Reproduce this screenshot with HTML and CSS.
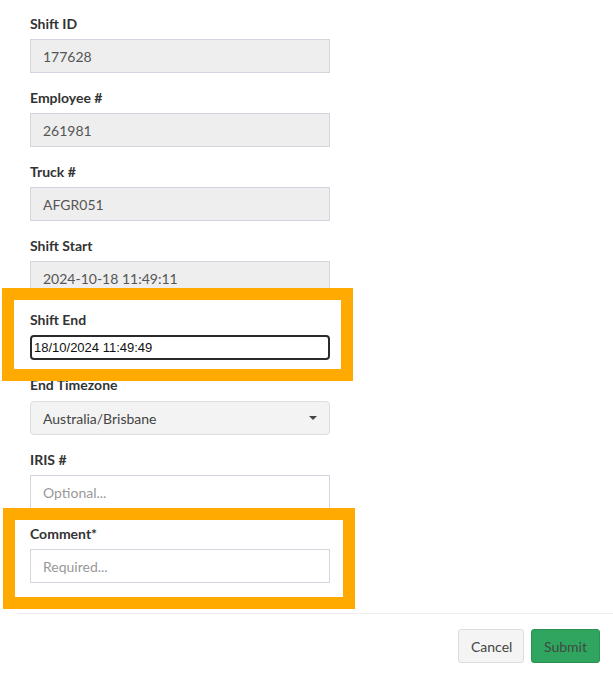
FILE: index.html
```html
<!DOCTYPE html>
<html>
<head>
<meta charset="utf-8">
<link rel="stylesheet" href="styles.css">
</head>
<body>
<div class="modal">
  <div class="modal-body">
    <div class="group">
      <label class="lbl">Shift ID</label>
      <div class="field disabled">177628</div>
    </div>
    <div class="group">
      <label class="lbl">Employee #</label>
      <div class="field disabled">261981</div>
    </div>
    <div class="group">
      <label class="lbl">Truck #</label>
      <div class="field disabled">AFGR051</div>
    </div>
    <div class="group">
      <label class="lbl">Shift Start</label>
      <div class="field disabled">2024-10-18 11:49:11</div>
    </div>
    <div class="group hl-wrap">
      <div class="highlight hl-one"></div>
      <label class="lbl">Shift End</label>
      <div class="field datetime">18/10/2024 11:49:49</div>
    </div>
    <div class="group">
      <label class="lbl">End Timezone</label>
      <div class="field select"><span>Australia/Brisbane</span><span class="caret"></span></div>
    </div>
    <div class="group">
      <label class="lbl">IRIS #</label>
      <div class="field placeholder">Optional...</div>
    </div>
    <div class="group hl-wrap">
      <div class="highlight hl-two"></div>
      <label class="lbl">Comment*</label>
      <div class="field placeholder">Required...</div>
    </div>
  </div>
  <div class="modal-footer">
    <button class="btn btn-default">Cancel</button>
    <button class="btn btn-success">Submit</button>
  </div>
</div>
</body>
</html>
```
FILE: styles.css
```css
html, body {
  margin: 0;
  padding: 0;
  background: #fff;
}
body {
  font-family: Lato, "Open Sans", sans-serif;
  font-size: 14px;
  color: #333;
}
.modal {
  margin-left: 17px;
}
.modal-body {
  padding: 14px 13px 15px 13px;
}
.group {
  width: 300px;
  margin-bottom: 15px;
  display: flex;
  flex-direction: column;
}
.hl-wrap {
  position: relative;
}
.lbl {
  font-weight: 700;
  font-size: 14px;
  line-height: 20px;
  height: 20px;
  margin-bottom: 5px;
  color: #333;
}
.field {
  box-sizing: border-box;
  height: 34px;
  padding: 0 12px;
  border: 1px solid #d2d6de;
  background: #fff;
  color: #555;
  font-size: 14px;
  display: flex;
  align-items: center;
}
.disabled {
  background: #eee;
}
.datetime {
  height: 25px;
  border: 2px solid #2b2b2b;
  border-radius: 4px;
  padding: 0 2px;
  font-family: "Liberation Sans", Arial, sans-serif;
  font-size: 13px;
  color: #111;
}
.select {
  margin-top: 1px;
  background: #f3f3f3;
  border-color: #ddd;
  border-radius: 4px;
  color: #444;
  justify-content: space-between;
}
.caret {
  width: 0;
  height: 0;
  border-left: 4px solid transparent;
  border-right: 4px solid transparent;
  border-top: 4px solid #444;
}
.placeholder {
  color: #999;
}
.highlight {
  position: absolute;
  box-sizing: border-box;
  border: 12px solid #ffaa00;
  pointer-events: none;
}
.hl-one {
  left: -28px;
  top: -22px;
  width: 351px;
  height: 93px;
}
.hl-two {
  left: -27px;
  top: -16px;
  width: 352px;
  height: 101px;
}
.modal-footer {
  border-top: 1px solid #eee;
  padding: 15px 13px 15px 15px;
  display: flex;
  justify-content: flex-end;
  gap: 7px;
}
.btn {
  box-sizing: border-box;
  height: 34px;
  padding: 0 12px;
  font-family: Lato, "Open Sans", sans-serif;
  font-size: 14px;
  border-radius: 3px;
  color: #444;
  cursor: pointer;
}
.btn-default {
  background: #f4f4f4;
  border: 1px solid #ddd;
  width: 66px;
}
.btn-success {
  background: #30a55f;
  border: 1px solid #2a8f51;
  color: #3e4a43;
  width: 69px;
}
```
